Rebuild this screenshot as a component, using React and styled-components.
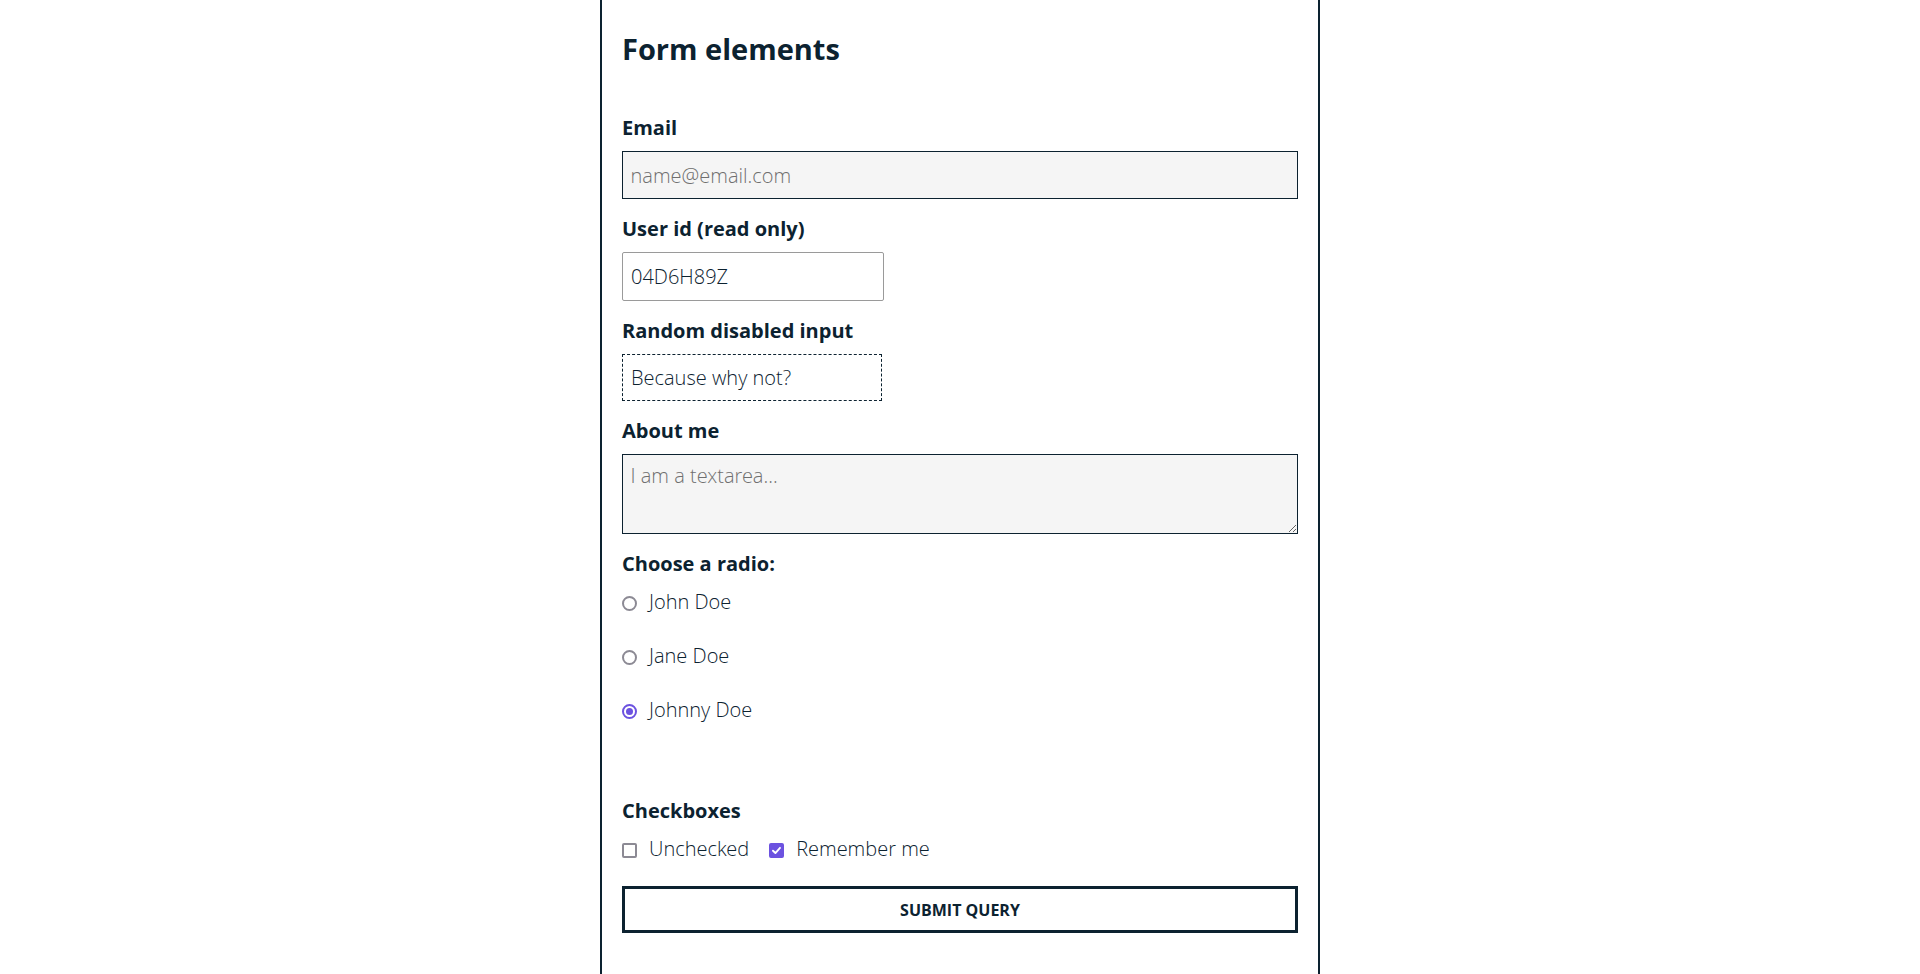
import React from "react";
import styled, { createGlobalStyle, css } from "styled-components";

const ink = "#0c2230";
const accent = "#6c52e0";

const GlobalStyle = createGlobalStyle`
  html, body {
    margin: 0;
    padding: 0;
    background: #fff;
  }
  body {
    font-family: "Open Sans", "Liberation Sans", sans-serif;
    color: ${ink};
  }
  * { box-sizing: border-box; }
`;

const Card = styled.main`
  width: 720px;
  min-height: 1000px;
  margin: 0 auto;
  padding: 31px 20px 60px;
  border-left: 2px solid ${ink};
  border-right: 2px solid ${ink};
`;

const Title = styled.h2`
  margin: 0 0 48px;
  font-size: 29px;
  line-height: 36px;
  font-weight: 700;
`;

const Form = styled.form`
  display: flex;
  flex-direction: column;
`;

const Label = styled.label`
  display: block;
  margin-bottom: ${(p) => p.$gap || 10}px;
  font-size: 20px;
  line-height: 26px;
  font-weight: 700;
`;

const fieldBase = css`
  display: block;
  margin: 0 0 17px;
  padding: 0 7.5px;
  font-family: "Open Sans Light", "Open Sans", "Liberation Sans", sans-serif;
  font-size: 20px;
  font-weight: 300;
  color: ${ink};
  outline: none;
  &::placeholder {
    color: #6f6f6f;
    opacity: 1;
  }
`;

const variants = {
  filled: css`
    width: 100%;
    height: 48px;
    background: #f5f5f5;
    border: 1.5px solid ${ink};
  `,
  readonly: css`
    width: 262px;
    height: 49px;
    padding: 0 8px;
    background: #fff;
    border: 1px solid #9a9a9a;
    border-radius: 2px;
  `,
  disabled: css`
    width: 260px;
    height: 47px;
    padding: 0 8px;
    background: #fff;
    border: 1px dashed ${ink};
    border-radius: 0;
  `,
};

const Input = styled.input`
  ${fieldBase}
  ${(p) => variants[p.$variant || "filled"]}
`;

const TextArea = styled.textarea`
  ${fieldBase}
  width: 100%;
  height: 80px;
  padding: 8px 7.5px;
  background: #f5f5f5;
  border: 1.5px solid ${ink};
  line-height: 26px;
`;

const RadioList = styled.div`
  display: flex;
  flex-direction: column;
  gap: 27px;
  margin: 0 0 75px;
`;

const Option = styled.label`
  display: inline-flex;
  align-items: center;
  gap: 12px;
  margin-right: ${(p) => p.$space || 0}px;
  font-family: "Open Sans Light", "Open Sans", "Liberation Sans", sans-serif;
  font-size: 20px;
  line-height: 27px;
  font-weight: 300;
  cursor: pointer;

  input {
    position: absolute;
    opacity: 0;
    width: 0;
    height: 0;
    margin: 0;
  }
`;

const Mark = styled.span`
  flex: none;
  width: 15px;
  height: 15px;
  margin-top: 3px;
  display: flex;
  align-items: center;
  justify-content: center;
  border: 2px solid ${(p) => (p.$on ? accent : "#8c8a94")};
  border-radius: ${(p) => (p.$round ? "50%" : "2px")};
  background: ${(p) => (p.$on && !p.$round ? accent : "#fff")};

  &::after {
    content: "";
    display: ${(p) => (p.$on && p.$round ? "block" : "none")};
    width: 7px;
    height: 7px;
    border-radius: 50%;
    background: ${accent};
  }
`;

const CheckRow = styled.div`
  display: flex;
  align-items: center;
  margin: 1px 0 24px;
`;

const Submit = styled.button`
  width: 100%;
  height: 47px;
  background: #fff;
  border: 3px solid ${ink};
  color: ${ink};
  font-family: "Open Sans", "Liberation Sans", sans-serif;
  font-size: 16px;
  font-weight: 700;
  text-transform: uppercase;
  cursor: pointer;
`;

const Tick = () => (
  <svg width="11" height="11" viewBox="0 0 10 10" fill="none">
    <path d="M1.8 5.2 L4 7.3 L8.2 2.6" stroke="#fff" strokeWidth="1.7" strokeLinecap="round" strokeLinejoin="round" />
  </svg>
);

const radios = ["John Doe", "Jane Doe", "Johnny Doe"];

export default function App() {
  const [who, setWho] = React.useState("Johnny Doe");
  const [checks, setChecks] = React.useState({ a: false, b: true });

  return (
    <>
      <GlobalStyle />
      <Card>
        <Title>Form elements</Title>
        <Form onSubmit={(e) => e.preventDefault()}>
          <Label htmlFor="email">Email</Label>
          <Input id="email" type="email" placeholder="name@email.com" />

          <Label htmlFor="uid">User id (read only)</Label>
          <Input id="uid" $variant="readonly" readOnly defaultValue="04D6H89Z" />

          <Label htmlFor="rnd">Random disabled input</Label>
          <Input id="rnd" $variant="disabled" disabled defaultValue="Because why not?" />

          <Label htmlFor="about">About me</Label>
          <TextArea id="about" placeholder="I am a textarea..." />

          <Label as="div" $gap={11}>Choose a radio:</Label>
          <RadioList>
            {radios.map((name) => (
              <Option key={name}>
                <input
                  type="radio"
                  name="who"
                  checked={who === name}
                  onChange={() => setWho(name)}
                />
                <Mark $round $on={who === name} />
                {name}
              </Option>
            ))}
          </RadioList>

          <Label as="div" $gap={10}>Checkboxes</Label>
          <CheckRow>
            <Option $space={20}>
              <input
                type="checkbox"
                checked={checks.a}
                onChange={() => setChecks({ ...checks, a: !checks.a })}
              />
              <Mark $on={checks.a}>{checks.a && <Tick />}</Mark>
              Unchecked
            </Option>
            <Option>
              <input
                type="checkbox"
                checked={checks.b}
                onChange={() => setChecks({ ...checks, b: !checks.b })}
              />
              <Mark $on={checks.b}>{checks.b && <Tick />}</Mark>
              Remember me
            </Option>
          </CheckRow>

          <Submit type="submit">Submit Query</Submit>
        </Form>
      </Card>
    </>
  );
}
